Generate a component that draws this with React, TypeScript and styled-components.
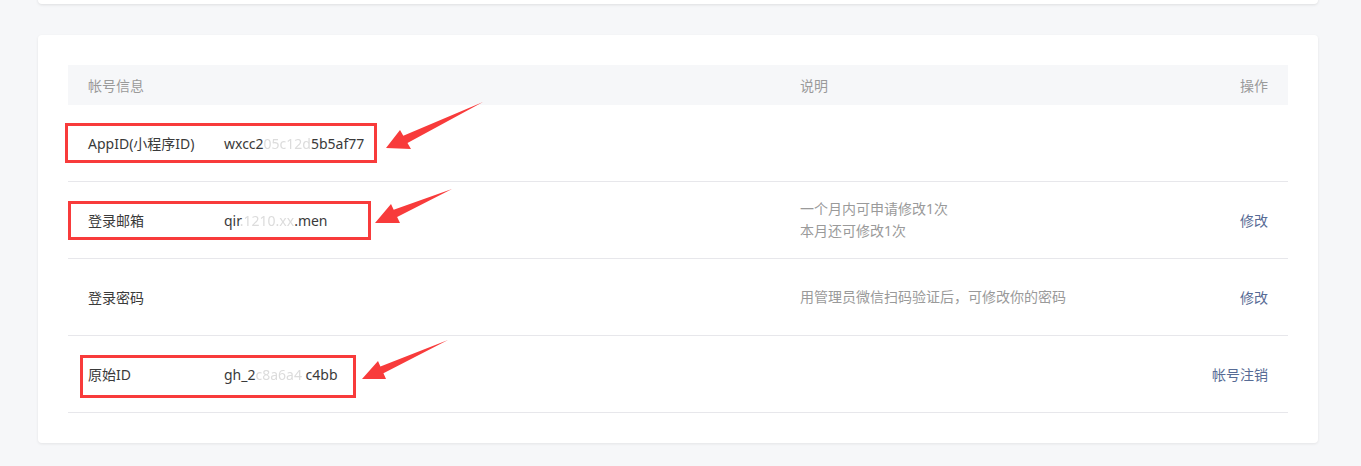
import React from "react";
import styled, { createGlobalStyle } from "styled-components";

const GlobalStyle = createGlobalStyle`
  html, body {
    margin: 0;
    padding: 0;
    background: #f6f7f9;
    font-family: "Noto Sans", "Noto Sans CJK SC", sans-serif;
    font-size: 14px;
    color: #353535;
    overflow: hidden;
  }
`;

const Page = styled.div`
  position: relative;
  display: flow-root;
  width: 1361px;
  box-sizing: border-box;
  padding: 0 43px 30px 38px;
`;

const TopCard = styled.div`
  height: 40px;
  margin-top: -36px;
  background: #fff;
  border-radius: 4px;
  box-shadow: 0 1px 3px rgba(0, 0, 0, 0.1);
`;

const Card = styled.div`
  margin-top: 31px;
  padding: 30px 30px 30px;
  background: #fff;
  border-radius: 4px;
  box-shadow: 0 1px 3px rgba(0, 0, 0, 0.08);
`;

const Table = styled.div`
  display: flex;
  flex-direction: column;
`;

const gridCols = `
  display: grid;
  grid-template-columns: 136px 576px 1fr auto;
  align-items: center;
  padding: 0 20px;
`;

const HeaderRow = styled.div`
  ${gridCols}
  height: 40px;
  background: #f6f7f9;
  color: #9a9a9a;
`;

const HeadCell = styled.div<{ $span?: number; $right?: boolean }>`
  grid-column: span ${(p) => p.$span ?? 1};
  text-align: ${(p) => (p.$right ? "right" : "left")};
`;

const Row = styled.div`
  ${gridCols}
  height: 76px;
  border-bottom: 1px solid #e7e7eb;
`;

const Label = styled.div`
  color: #3a3a3a;
`;

const Value = styled.div`
  color: #3a3a3a;
  white-space: nowrap;
`;

const Masked = styled.span`
  color: #dcdcdc;
  filter: blur(0.4px);
`;

const Desc = styled.div`
  color: #9a9a9a;
  line-height: 22px;
`;

const Action = styled.a`
  color: #576b95;
  text-decoration: none;
  text-align: right;
  cursor: pointer;
`;

const Overlay = styled.svg`
  position: absolute;
  left: 0;
  top: 0;
  pointer-events: none;
`;

const RED = "#f83b3b";

type ArrowSpec = {
  tip: [number, number];
  w1: [number, number];
  w2: [number, number];
  tail: [number, number];
};

function arrowPoints(a: ArrowSpec) {
  const p1: [number, number] = [
    a.w1[0] + (a.w2[0] - a.w1[0]) * 0.3,
    a.w1[1] + (a.w2[1] - a.w1[1]) * 0.3,
  ];
  const p2: [number, number] = [
    a.w1[0] + (a.w2[0] - a.w1[0]) * 0.68,
    a.w1[1] + (a.w2[1] - a.w1[1]) * 0.68,
  ];
  return [a.tip, a.w1, p1, a.tail, p2, a.w2].map((p) => p.join(",")).join(" ");
}

const arrows: ArrowSpec[] = [
  { tip: [386, 148], w1: [400, 130], w2: [411, 149], tail: [483, 102] },
  { tip: [375, 223], w1: [391, 204], w2: [400, 223], tail: [452, 189] },
  { tip: [362, 379], w1: [378, 361], w2: [386, 379], tail: [448, 340] },
];

const boxes = [
  { x: 65, y: 123, w: 312, h: 40 },
  { x: 68, y: 201, w: 303, h: 39 },
  { x: 80, y: 355, w: 276, h: 43 },
];

export default function App() {
  return (
    <>
      <GlobalStyle />
      <Page>
        <TopCard />
        <Card>
          <Table>
            <HeaderRow>
              <HeadCell $span={2}>帐号信息</HeadCell>
              <HeadCell>说明</HeadCell>
              <HeadCell $right>操作</HeadCell>
            </HeaderRow>
            <Row>
              <Label>AppID(小程序ID)</Label>
              <Value>
                wxcc2<Masked>05c12d</Masked>5b5af77
              </Value>
              <Desc />
              <span />
            </Row>
            <Row>
              <Label>登录邮箱</Label>
              <Value>
                qir<Masked>.1210.xx</Masked>.men
              </Value>
              <Desc>
                一个月内可申请修改1次
                <br />
                本月还可修改1次
              </Desc>
              <Action>修改</Action>
            </Row>
            <Row>
              <Label>登录密码</Label>
              <Value />
              <Desc>用管理员微信扫码验证后，可修改你的密码</Desc>
              <Action>修改</Action>
            </Row>
            <Row>
              <Label>原始ID</Label>
              <Value>
                gh_2<Masked>c8a6a4</Masked> c4bb
              </Value>
              <Desc />
              <Action>帐号注销</Action>
            </Row>
          </Table>
        </Card>
        <Overlay width={1361} height={466} viewBox="0 0 1361 466">
          {boxes.map((b, i) => (
            <rect
              key={i}
              x={b.x + 1.5}
              y={b.y + 1.5}
              width={b.w - 3}
              height={b.h - 3}
              fill="none"
              stroke={RED}
              strokeWidth={3}
            />
          ))}
          {arrows.map((a, i) => (
            <polygon key={i} points={arrowPoints(a)} fill={RED} />
          ))}
        </Overlay>
      </Page>
    </>
  );
}
